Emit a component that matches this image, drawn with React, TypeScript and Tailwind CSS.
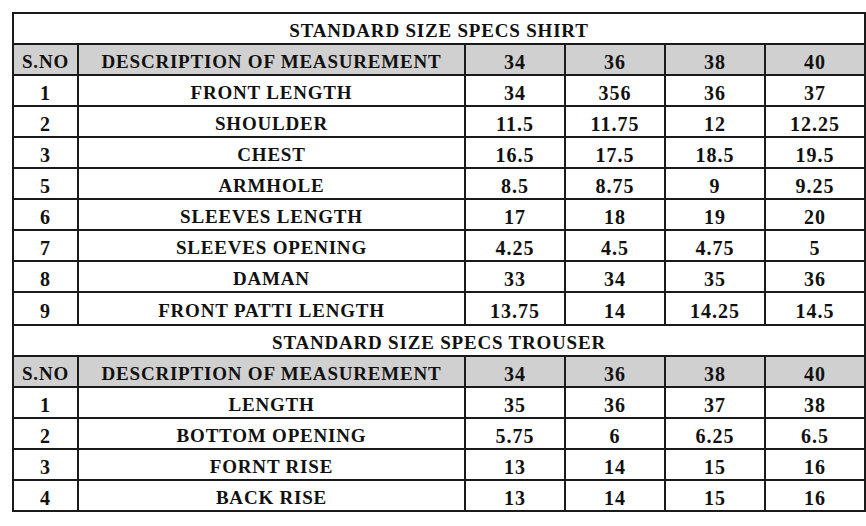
const shirt = [
  { no: "1", name: "FRONT LENGTH", v: ["34", "356", "36", "37"] },
  { no: "2", name: "SHOULDER", v: ["11.5", "11.75", "12", "12.25"] },
  { no: "3", name: "CHEST", v: ["16.5", "17.5", "18.5", "19.5"] },
  { no: "5", name: "ARMHOLE", v: ["8.5", "8.75", "9", "9.25"] },
  { no: "6", name: "SLEEVES LENGTH", v: ["17", "18", "19", "20"] },
  { no: "7", name: "SLEEVES OPENING", v: ["4.25", "4.5", "4.75", "5"] },
  { no: "8", name: "DAMAN", v: ["33", "34", "35", "36"] },
  { no: "9", name: "FRONT PATTI LENGTH", v: ["13.75", "14", "14.25", "14.5"] },
];

const trouser = [
  { no: "1", name: "LENGTH", v: ["35", "36", "37", "38"] },
  { no: "2", name: "BOTTOM OPENING", v: ["5.75", "6", "6.25", "6.5"] },
  { no: "3", name: "FORNT RISE", v: ["13", "14", "15", "16"] },
  { no: "4", name: "BACK RISE", v: ["13", "14", "15", "16"] },
];

const sizes = ["34", "36", "38", "40"];

const cell = "border-2 border-[#1a1a1a] text-center pt-[3px]";
const num = "border-2 border-[#1a1a1a] text-center pt-[4px] text-[20px] tracking-[1px]";

function Section({ title, rows }: { title: string; rows: typeof shirt }) {
  return (
    <>
      <tr className="h-[31px]">
        <td colSpan={6} className={`${cell} bg-white`}>
          {title}
        </td>
      </tr>
      <tr className="h-[31px] bg-[#d1d0d0]">
        <td className={cell}>S.NO</td>
        <td className={cell}>DESCRIPTION OF MEASUREMENT</td>
        {sizes.map((s) => (
          <td key={s} className={num}>
            {s}
          </td>
        ))}
      </tr>
      {rows.map((r, i) => (
        <tr key={i} className={i === 7 ? "h-[33px]" : "h-[31px]"}>
          <td className={num}>{r.no}</td>
          <td className={cell}>{r.name}</td>
          {r.v.map((x, j) => (
            <td key={j} className={num}>
              {x}
            </td>
          ))}
        </tr>
      ))}
    </>
  );
}

export default function App() {
  return (
    <div className="w-[866px] h-[526px] bg-white pl-[12px] pt-[12px]">
      <table
        className="table-fixed border-collapse w-[852px] font-bold text-[19px] leading-none tracking-[0.8px] text-[#111]"
        style={{ fontFamily: '"Liberation Serif", serif' }}
      >
        <colgroup>
          <col className="w-[65px]" />
          <col className="w-[387px]" />
          <col className="w-[100px]" />
          <col className="w-[100px]" />
          <col className="w-[100px]" />
          <col className="w-[100px]" />
        </colgroup>
        <tbody>
          <Section title="STANDARD SIZE SPECS SHIRT" rows={shirt} />
          <Section title="STANDARD SIZE SPECS TROUSER" rows={trouser} />
        </tbody>
      </table>
    </div>
  );
}
